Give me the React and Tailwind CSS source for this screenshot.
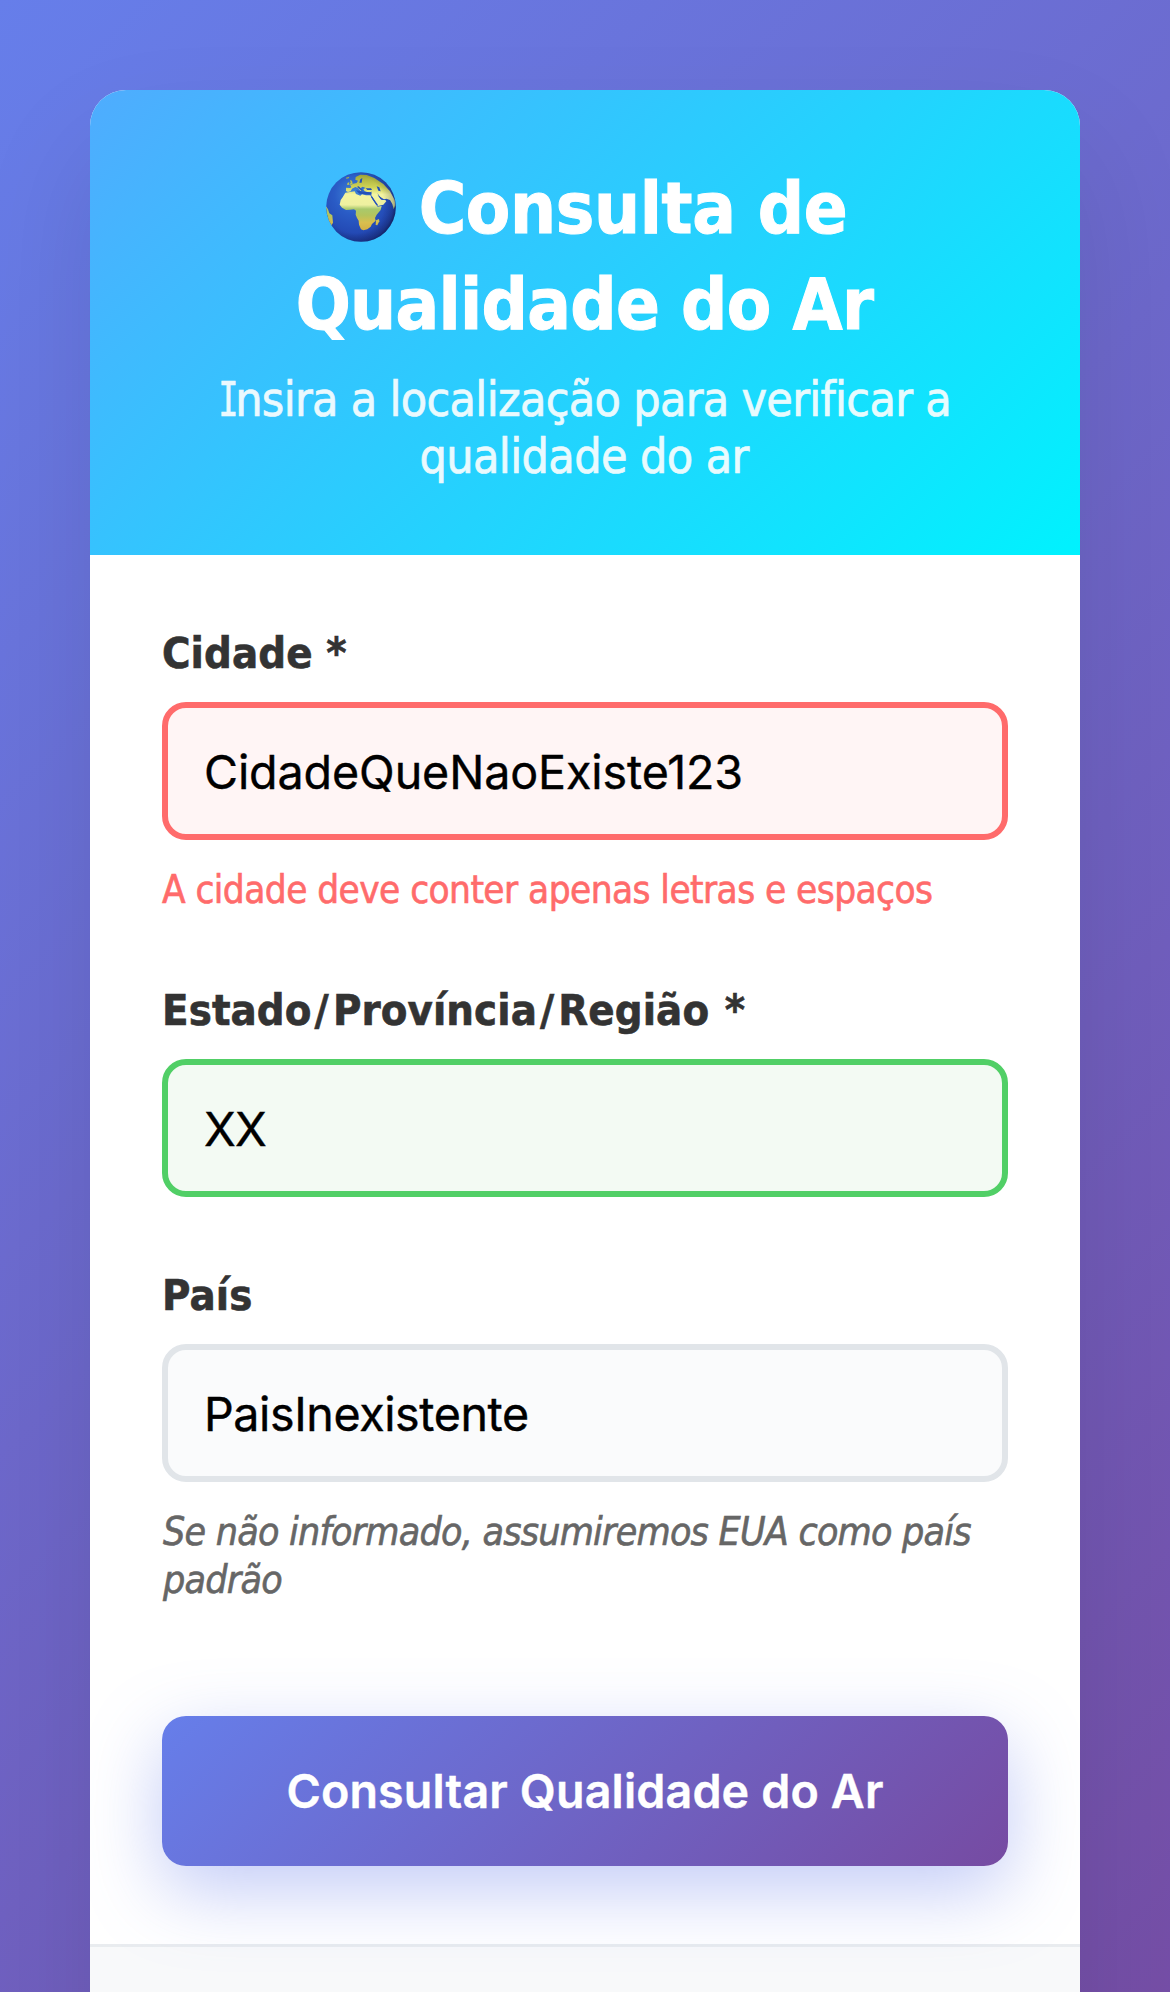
import React from "react";

function Globe() {
  return (
    <svg viewBox="0 0 210 210" className="mb-[2px] h-[70px] w-[70px]" aria-hidden="true">
      <defs>
        <radialGradient id="sea" cx="0.4" cy="0.32" r="0.7">
          <stop offset="0" stopColor="#3f86d8" />
          <stop offset="0.4" stopColor="#2a5cc6" />
          <stop offset="0.8" stopColor="#2349b4" />
          <stop offset="1" stopColor="#1c3696" />
        </radialGradient>
        <linearGradient id="land" x1="0" y1="0" x2="0" y2="210" gradientUnits="userSpaceOnUse">
          <stop offset="0.05" stopColor="#a3a93c" />
          <stop offset="0.22" stopColor="#d0d455" />
          <stop offset="0.32" stopColor="#f3f4a0" />
          <stop offset="0.47" stopColor="#eef0a0" />
          <stop offset="0.53" stopColor="#a9c96c" />
          <stop offset="0.62" stopColor="#b4c45c" />
          <stop offset="0.72" stopColor="#d9bf4f" />
          <stop offset="1" stopColor="#c99a35" />
        </linearGradient>
        <radialGradient id="shade" cx="0.42" cy="0.46" r="0.6">
          <stop offset="0.68" stopColor="#0a1030" stopOpacity="0" />
          <stop offset="0.9" stopColor="#0a1030" stopOpacity="0.22" />
          <stop offset="1" stopColor="#0a1030" stopOpacity="0.6" />
        </radialGradient>
        <clipPath id="disc">
          <circle cx="105" cy="105" r="104.5" />
        </clipPath>
      </defs>
      <g clipPath="url(#disc)">
        <rect width="210" height="210" fill="url(#sea)" />
        <g fill="url(#land)">
          <path d="M58 62 72 60 86 58 90 66 103 71 108 67 120 70 133 70 139 82 149 97 155 104 167 102 164 114 152 128 147 138 149 146 138 156 134 164 124 172 112 175 105 172 99 158 98 146 93 138 89 128 90 116 84 112 72 113 60 114 48 107 41 98 44 84 50 76Z" />
          <path d="M60 57 60 47 72 48 76 46 73 40 82 35 92 33 96 26 88 23 89 15 103 8 122 9 145 18 172 36 192 58 206 84 208 100 203 112 199 96 192 84 181 80 174 82 162 74 156 66 138 58 130 62 116 58 112 51 119 48 110 44 104 48 108 56 104 57 96 48 88 45 78 50 74 58 66 60Z" />
          <path d="M136 70 136 56 150 58 160 74 167 84 178 84 181 88 172 98 156 102 148 90Z" />
          <path d="M150 145 159 141 160 148 154 160 149 159Z" />
          <path d="M-2 100 6 112 10 124 19 130 21 152 15 162 8 152Z" />
          <path d="M72 24 78 26 80 36 70 39 74 32ZM65 32 70 31 69 38 63 38ZM60 17 70 14 68 19 61 20Z" />
        </g>
        <path d="M93 44 98 43 110 54 108 58ZM90 55 112 59 136 61 136 67 118 67 100 65Z" fill="#2450b8" />
        <path d="M119 49 135 49 138 54 124 54ZM152 43 160 46 164 58 157 56ZM103 22 109 18 107 32 100 32Z" fill="#2450b8" />
        <path d="M135 75 139 74 156 99 152 99ZM155 70 160 72 169 82 164 82Z" fill="#2450b8" />
        <rect width="210" height="210" fill="url(#shade)" />
      </g>
    </svg>
  );
}

const tones = {
  error: "border-[#ff6b6b] bg-[#fff5f5] tracking-[-0.1px]",
  success: "border-[#51cf66] bg-[#f3faf3] tracking-[-0.8px]",
  neutral: "border-[#e1e5e9] bg-[#fafbfc] tracking-[-0.4px]",
};

function Field({ label, value, tone }) {
  return (
    <label className="block">
      <span className="mb-[22px] -mt-px block text-[43.2px] leading-[54px] font-bold tracking-[0.1px] whitespace-nowrap text-[#333] [-webkit-text-stroke:0.6px]">
        {label}
      </span>
      <input
        type="text"
        defaultValue={value}
        className={`block h-[138px] w-full rounded-[24px] border-[6px] px-[36px] pt-[1px] font-['Inter',sans-serif] text-[46.6px] text-black outline-none [-webkit-text-stroke:0.4px] ${tones[tone]}`}
      />
    </label>
  );
}

function Slash() {
  return <span className="pr-[4px] pl-[3px]">/</span>;
}

export default function App() {
  return (
    <div className="h-[1992px] overflow-hidden">
      <div className="h-[2200px] bg-[linear-gradient(135deg,#667eea_0%,#764ba2_100%)] px-[90px] pt-[90px] font-['DejaVu_Sans_Condensed','DejaVu_Sans',sans-serif]">
        <main className="h-[2020px] overflow-hidden rounded-[36px] bg-white shadow-[0_60px_120px_rgba(0,0,0,0.1)]">
          <header className="h-[465px] bg-[linear-gradient(135deg,#4facfe_0%,#00f2fe_100%)] pt-[70px] text-center text-white">
            <h1 className="text-[72px] font-bold [-webkit-text-stroke:1px]">
              <span className="flex h-[96px] items-center justify-center gap-[23px] pl-[3px] leading-[96px] tracking-[-0.36px]">
                <Globe />
                <span>Consulta de</span>
              </span>
              <span className="block pr-px leading-[96px] tracking-[-0.68px]">Qualidade do Ar</span>
            </h1>
            <p className="mt-[19px] text-[48px] leading-[57px] opacity-90 [-webkit-text-stroke:0.7px]">
              <span className="block tracking-[-0.7px]">
                <span className="-mr-[7px] -ml-[5px] inline-block scale-x-[0.7] font-['DejaVu_Sans_Mono']">I</span>nsira a localização para verificar a
              </span>
              <span className="block pr-[2px] tracking-[-0.63px]">qualidade do ar</span>
            </p>
          </header>

          <form className="px-[72px] pt-[72px]" onSubmit={(e) => e.preventDefault()}>
            <Field label="Cidade *" value="CidadeQueNaoExiste123" tone="error" />
            <p className="mt-[26px] mb-[70px] text-[38.4px] leading-[48px] tracking-[-0.58px] whitespace-nowrap text-[#ff6b6b] [-webkit-text-stroke:0.6px]">
              A cidade deve conter apenas letras e espaços
            </p>

            <Field
              label={<>Estado<Slash />Província<Slash />Região <span className="pl-[2px]">*</span></>}
              value="XX"
              tone="success"
            />

            <div className="mt-[72px]">
              <Field label="País" value="PaisInexistente" tone="neutral" />
            </div>
            <p className="mt-[26px] pl-px text-[39px] leading-[48px] tracking-[-0.77px] text-[#666] italic [-webkit-text-stroke:0.6px]">
              Se não informado, assumiremos EUA como país padrão
            </p>

            <button
              type="submit"
              className="relative mt-[112px] block h-[150px] w-full rounded-[24px] bg-[linear-gradient(135deg,#667eea_0%,#764ba2_100%)] pt-[2px] font-['Inter',sans-serif] text-[46.6px] font-semibold tracking-[0.15px] whitespace-nowrap text-white shadow-[0_24px_75px_rgba(102,126,234,0.4)] [-webkit-text-stroke:0.4px]"
            >
              Consultar Qualidade do Ar
            </button>
          </form>

          <footer className="mt-[78px] h-[166px] border-t-[3px] border-[#e9ecef] bg-[#f8f9fa]" />
        </main>
      </div>
    </div>
  );
}
